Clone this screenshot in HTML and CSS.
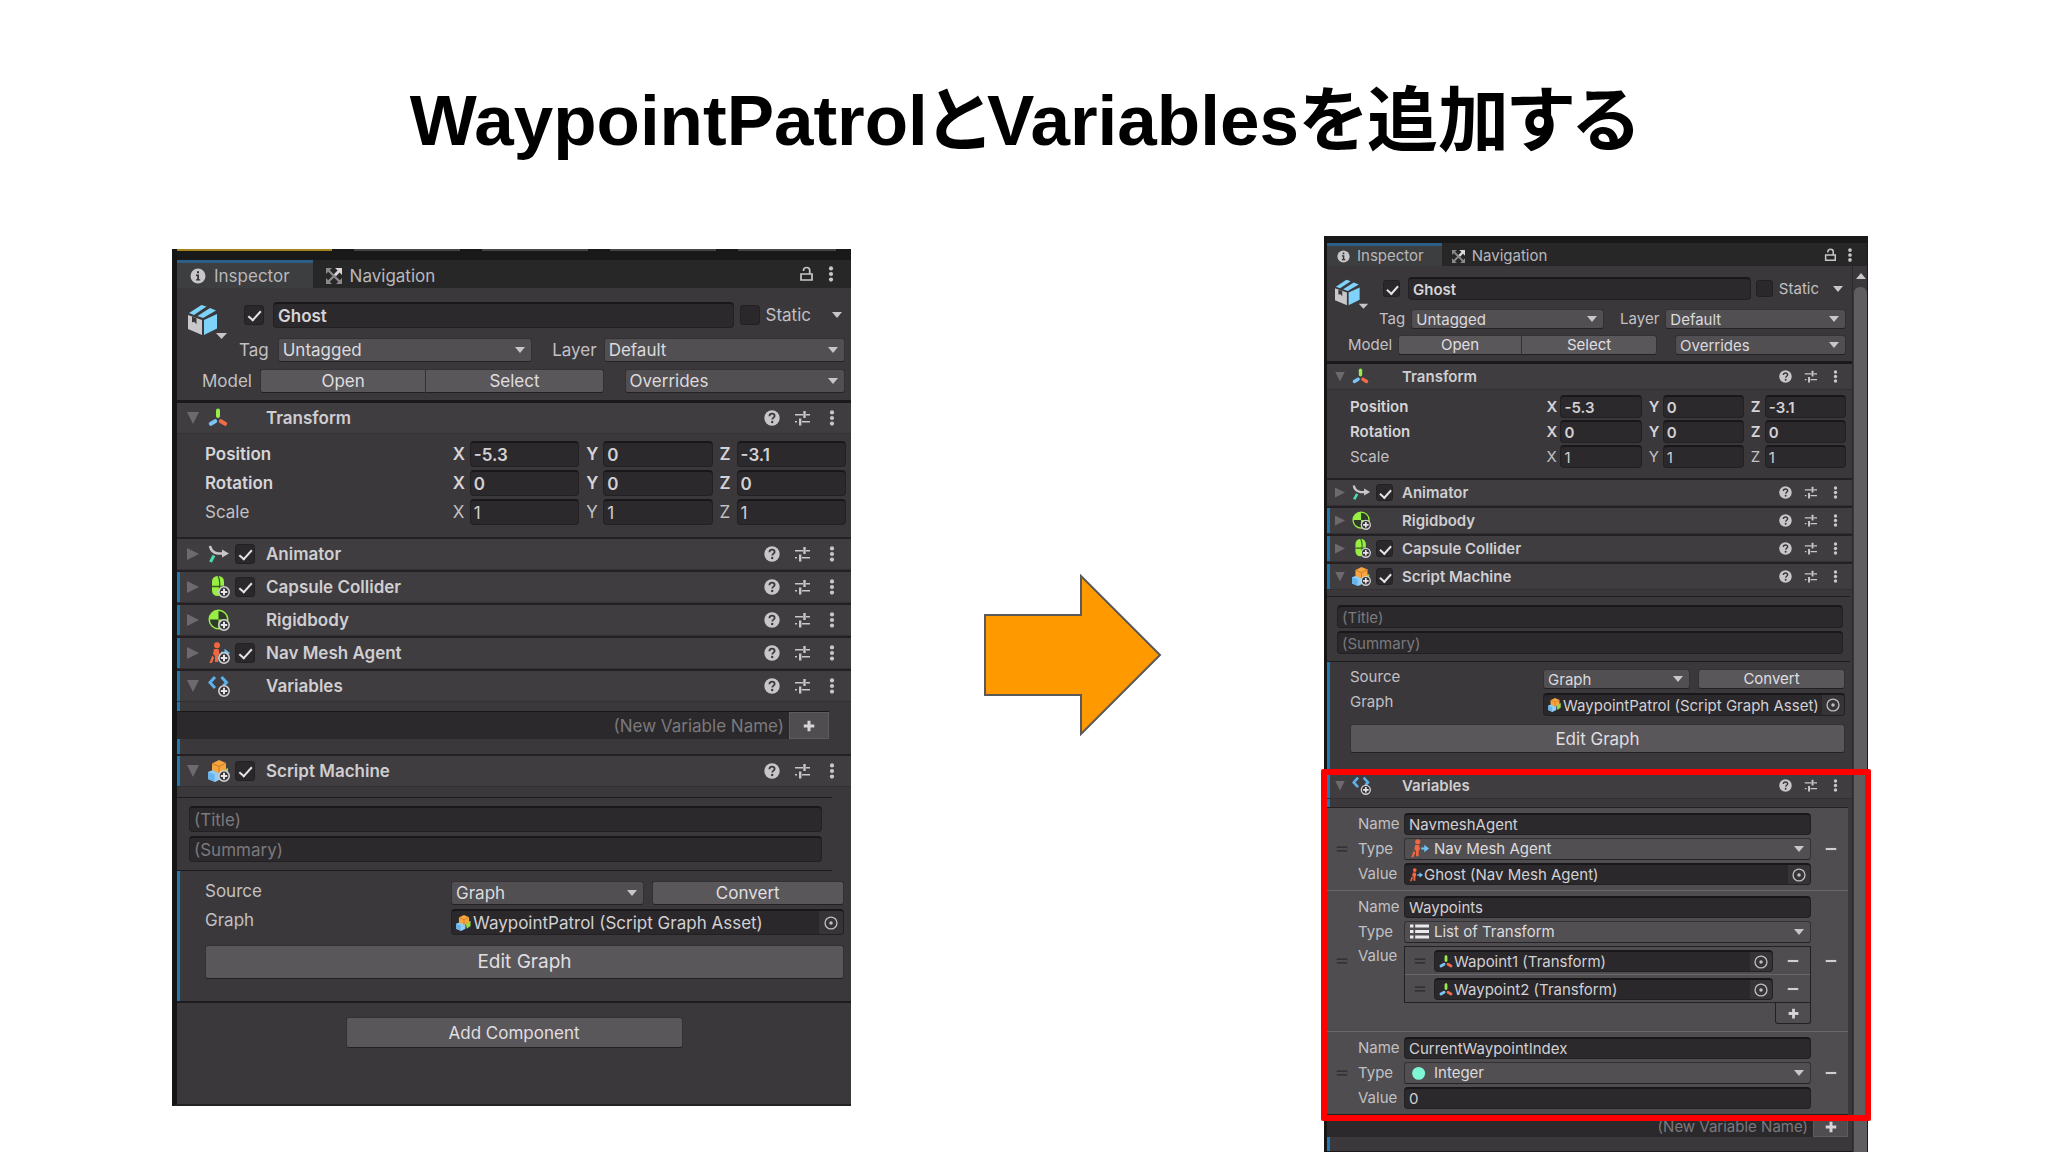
FILE: index.html
```
<!DOCTYPE html>
<html lang="ja">
<head>
    <meta charset="UTF-8">
    <meta name="viewport" content="width=device-width, initial-scale=1.0">
    <title>WaypointPatrolとVariablesを追加する</title>
    <link rel="stylesheet" href="styles.css">
</head>
<body>
    <svg class="sprite" aria-hidden="true">
        <symbol id="i-info" viewBox="0 0 16 16"><circle cx="8" cy="8" r="7.5" fill="#c8c6c9"/><path d="M6 6.6h3v4.600h1.200v1.400H6v-1.400h1.200V8H6zM7 3.200h2v2.100H7z" fill="#333"/></symbol>
        <symbol id="i-nav" viewBox="0 0 16 16"><g stroke="#8b898c" stroke-width="2.4" fill="none"><path d="M2 2l12 12M2 14L14 2"/></g><path d="M0 0h6L0 6zM0 16v-6l6 6zM16 16h-6l6-6z" fill="#8b898c"/><path d="M9 0h7v7l-2.400-2.400-3.600 3.600-2-2 3.600-3.600z" fill="#d8d6d9"/></symbol>
        <symbol id="i-lock" viewBox="0 0 16 16"><path d="M3 8h11v6H3zM5.500 5V4.200C5.500 2.400 7 1.500 8.600 1.500s3.100 1 3.100 2.700V8" fill="none" stroke="#c8c6c9" stroke-width="1.700"/></symbol>
        <symbol id="i-dots" viewBox="0 0 16 16"><g fill="#c8c6c9"><circle cx="8" cy="2.400" r="2.100"/><circle cx="8" cy="8" r="2.100"/><circle cx="8" cy="13.600" r="2.100"/></g></symbol>
        <symbol id="i-help" viewBox="0 0 16 16"><circle cx="8" cy="8" r="7.700" fill="#c8c6c9"/><path d="M5.400 6.300C5.400 4.600 6.500 3.700 8 3.700s2.600.9 2.600 2.200c0 1.700-2.300 1.800-2.300 3.500" fill="none" stroke="#3a383b" stroke-width="1.800"/><circle cx="8.200" cy="12" r="1.200" fill="#3a383b"/></symbol>
        <symbol id="i-preset" viewBox="0 0 16 16"><g fill="#c8c6c9"><path d="M1 4h8v1.500H1zM12 4h4v1.500h-4zM9.300 1h2.400v7H9.300zM1 11h2v1.500H1zM8 11h8v1.500H8zM5 8.500h2.400v7H5z"/></g></symbol>
        <symbol id="i-cube" viewBox="0 0 40 40"><path d="M0 11l14 5v15L0 25z" fill="#c9c7ca"/><path d="M4 12.500l4.500 1.700v6L6.400 18 4 18.300z" fill="#39373a"/><path d="M16 16l13-6v14.500L16 31z" fill="#7fd3fb"/><path d="M1 9L13.500 1l5 1.600L6 11z" fill="#7fd3fb"/><path d="M9.500 12L22 4l6 2.500L15 14z" fill="#7fd3fb"/><path d="M28 29h11l-5.500 6z" fill="#c8c6c9"/></symbol>
        <symbol id="i-transform" viewBox="0 0 20 20"><g stroke-width="4" stroke-linecap="round"><path d="M10 2.500V8" stroke="#97ec4c"/><path d="M7.200 13.200L2.800 15.800" stroke="#7cc4f5"/><path d="M12.800 13.200L17.200 15.800" stroke="#f26b45"/></g></symbol>
        <symbol id="i-plus-badge" viewBox="0 0 22 22"><circle cx="16" cy="16" r="5.200" fill="#333134" stroke="#d2d0d3" stroke-width="1.600"/><path d="M16 12.800v6.400M12.800 16h6.400" stroke="#e6e4e7" stroke-width="2"/></symbol>
        <symbol id="i-animator" viewBox="0 0 22 22"><path d="M2 3c1 5 4 7 8 7.500h5" fill="none" stroke="#c8c6c9" stroke-width="2.600"/><path d="M14 6.500l7 4-7 4z" fill="#c8c6c9"/><path d="M6 12.500L2.500 19" stroke="#48dcae" stroke-width="3"/></symbol>
        <symbol id="i-capsule" viewBox="0 0 22 22"><rect x="4" y="0" width="12" height="20" rx="5.500" fill="#98ee42"/><path d="M4 10.500h12M10 0c2 3 2 6 1.500 10.500V20" stroke="#3a5c22" stroke-width="1.300" fill="none"/><use href="#i-plus-badge"/></symbol>
        <symbol id="i-rigid" viewBox="0 0 22 22"><circle cx="10.500" cy="10.500" r="9.300" fill="#2f3a28" stroke="#98ee42" stroke-width="1.500"/><path d="M10.500 10.500V1.200a9.300 9.300 0 0 0-9.300 9.300zM10.500 10.500h9.300a9.300 9.300 0 0 1-9.300 9.300z" fill="#98ee42"/><use href="#i-plus-badge"/></symbol>
        <symbol id="i-agent" viewBox="0 0 22 22"><g fill="#f2673f"><circle cx="9" cy="3.200" r="3"/><path d="M6 7h4.500l1 5-1.500 1.500V20H7v-6l-2-2zM4.200 13.500l2 2L4 21H1.500z"/></g><path d="M13 9.800h3.500V6.800L22 11l-5.500 4.200v-3H13z" fill="#6cc3f4"/></symbol>
        <symbol id="i-agent-plus" viewBox="0 0 22 22"><use href="#i-agent"/><use href="#i-plus-badge"/></symbol>
        <symbol id="i-vars" viewBox="0 0 22 22"><path d="M7 2L2 7.500 7 13M13.500 2l5 5.500-3 3" fill="none" stroke="#5db0ea" stroke-width="3"/><use href="#i-plus-badge"/></symbol>
        <symbol id="i-blocks" viewBox="0 0 22 22"><path d="M13 11l7-3v7l-5 4z" fill="#9ad548"/><path d="M0 12l6-2.500 7 2.500v7l-6 3-7-3z" fill="#8fcdf7"/><path d="M0 12l6.500 2.500v7.200L0 19z" fill="#6ab2ea"/><path d="M4 3.500L11 0l7 3v7l-7 3.500L4 10z" fill="#f7a540"/><path d="M4 3.500l7 3 7-3.500M11 6.500v7" fill="none" stroke="#cc7620" stroke-width="1"/></symbol>
        <symbol id="i-blocks-plus" viewBox="0 0 22 22"><use href="#i-blocks"/><use href="#i-plus-badge"/></symbol>
        <symbol id="i-list" viewBox="0 0 22 22"><path d="M0 3h4v3.500H0zM6 3h16v3.500H6zM0 9.300h4v3.500H0zM6 9.300h16v3.500H6zM0 15.600h4v3.500H0zM6 15.600h16v3.500H6z" fill="#eceaed"/></symbol>
        <symbol id="i-int" viewBox="0 0 22 22"><circle cx="10" cy="12" r="7.500" fill="#7ff7d4"/></symbol>
        <symbol id="i-target" viewBox="0 0 16 16"><circle cx="8" cy="8" r="6.800" fill="none" stroke="#c0bec1" stroke-width="1.500"/><circle cx="8" cy="8" r="2" fill="#c0bec1"/></symbol>
        <symbol id="i-plus" viewBox="0 0 16 16"><path d="M8 2v12M2 8h12" stroke="#d6d4d7" stroke-width="3.400"/></symbol>
        <symbol id="i-minus" viewBox="0 0 16 16"><path d="M2 8h12" stroke="#d0ced1" stroke-width="2.400"/></symbol>
        <symbol id="i-grip" viewBox="0 0 16 16"><path d="M1 5.500h14M1 10.500h14" stroke="#2b292c" stroke-width="1.400"/></symbol>
    </svg>

    <main class="slide">
        <h1>WaypointPatrolとVariablesを追加する</h1>

        <div class="stage">
            <!-- before -->
            <section class="inspector before" aria-label="Ghost before">
                <div class="strip"></div>
                <nav class="tabs">
                    <button class="tab active"><svg><use href="#i-info"/></svg>Inspector</button>
                    <button class="tab"><svg><use href="#i-nav"/></svg>Navigation</button>
                    <span class="tab-tools">
                        <button aria-label="Lock"><svg><use href="#i-lock"/></svg></button>
                        <button aria-label="Menu"><svg><use href="#i-dots"/></svg></button>
                    </span>
                </nav>
                <div class="content">
                    <div class="head">
                        <div class="head-row name-row">
                            <svg class="cube"><use href="#i-cube"/></svg>
                            <input type="checkbox" aria-label="Active" checked>
                            <input class="field bold" type="text" aria-label="Object name" value="Ghost">
                            <label class="static"><input type="checkbox">Static</label>
                            <button class="caret" aria-label="Static options"></button>
                        </div>
                        <div class="head-row tag-row">
                            <label for="tag-a">Tag</label>
                            <span class="drop"><select id="tag-a"><option>Untagged</option></select></span>
                            <label for="layer-a">Layer</label>
                            <span class="drop"><select id="layer-a"><option>Default</option></select></span>
                        </div>
                        <div class="head-row model-row">
                            <span>Model</span>
                            <button class="btn">Open</button>
                            <button class="btn">Select</button>
                            <span class="drop"><select aria-label="Overrides"><option>Overrides</option></select></span>
                        </div>
                    </div>

                    <section class="component first">
                        <header class="bar">
                            <button class="fold open" aria-label="Collapse"></button><svg class="icon small-icon"><use href="#i-transform"/></svg><i class="no-check"></i>
                            <h2>Transform</h2>
                            <button class="tool" aria-label="Help"><svg><use href="#i-help"/></svg></button><button class="tool" aria-label="Presets"><svg><use href="#i-preset"/></svg></button><button class="tool" aria-label="More"><svg><use href="#i-dots"/></svg></button>
                        </header>
                        <div class="vectors">
                            <div class="vector bold"><span>Position</span><label>X<input class="field" type="text" value="-5.3"></label><label>Y<input class="field" type="text" value="0"></label><label>Z<input class="field" type="text" value="-3.1"></label></div>
                            <div class="vector bold"><span>Rotation</span><label>X<input class="field" type="text" value="0"></label><label>Y<input class="field" type="text" value="0"></label><label>Z<input class="field" type="text" value="0"></label></div>
                            <div class="vector"><span>Scale</span><label>X<input class="field" type="text" value="1"></label><label>Y<input class="field" type="text" value="1"></label><label>Z<input class="field" type="text" value="1"></label></div>
                        </div>
                    </section>

                    <section class="component">
                        <header class="bar">
                            <button class="fold" aria-label="Expand"></button><svg class="icon"><use href="#i-animator"/></svg><input type="checkbox" aria-label="Animator enabled" checked>
                            <h2>Animator</h2>
                            <button class="tool" aria-label="Help"><svg><use href="#i-help"/></svg></button><button class="tool" aria-label="Presets"><svg><use href="#i-preset"/></svg></button><button class="tool" aria-label="More"><svg><use href="#i-dots"/></svg></button>
                        </header>
                    </section>
                    <section class="component added">
                        <header class="bar">
                            <button class="fold" aria-label="Expand"></button><svg class="icon"><use href="#i-capsule"/></svg><input type="checkbox" aria-label="Capsule Collider enabled" checked>
                            <h2>Capsule Collider</h2>
                            <button class="tool" aria-label="Help"><svg><use href="#i-help"/></svg></button><button class="tool" aria-label="Presets"><svg><use href="#i-preset"/></svg></button><button class="tool" aria-label="More"><svg><use href="#i-dots"/></svg></button>
                        </header>
                    </section>
                    <section class="component added">
                        <header class="bar">
                            <button class="fold" aria-label="Expand"></button><svg class="icon"><use href="#i-rigid"/></svg><i class="no-check"></i>
                            <h2>Rigidbody</h2>
                            <button class="tool" aria-label="Help"><svg><use href="#i-help"/></svg></button><button class="tool" aria-label="Presets"><svg><use href="#i-preset"/></svg></button><button class="tool" aria-label="More"><svg><use href="#i-dots"/></svg></button>
                        </header>
                    </section>
                    <section class="component added">
                        <header class="bar">
                            <button class="fold" aria-label="Expand"></button><svg class="icon"><use href="#i-agent-plus"/></svg><input type="checkbox" aria-label="Nav Mesh Agent enabled" checked>
                            <h2>Nav Mesh Agent</h2>
                            <button class="tool" aria-label="Help"><svg><use href="#i-help"/></svg></button><button class="tool" aria-label="Presets"><svg><use href="#i-preset"/></svg></button><button class="tool" aria-label="More"><svg><use href="#i-dots"/></svg></button>
                        </header>
                    </section>

                    <section class="component added">
                        <header class="bar">
                            <button class="fold open" aria-label="Collapse"></button><svg class="icon"><use href="#i-vars"/></svg><i class="no-check"></i>
                            <h2>Variables</h2>
                            <button class="tool" aria-label="Help"><svg><use href="#i-help"/></svg></button><button class="tool" aria-label="Presets"><svg><use href="#i-preset"/></svg></button><button class="tool" aria-label="More"><svg><use href="#i-dots"/></svg></button>
                        </header>
                        <div class="variables">
                            <div class="new-variable"><input type="text" aria-label="New variable name" placeholder="(New Variable Name)"><button aria-label="Add variable"><svg><use href="#i-plus"/></svg></button></div>
                        </div>
                    </section>

                    <section class="component added">
                        <header class="bar">
                            <button class="fold open" aria-label="Collapse"></button><svg class="icon"><use href="#i-blocks-plus"/></svg><input type="checkbox" aria-label="Script Machine enabled" checked>
                            <h2>Script Machine</h2>
                            <button class="tool" aria-label="Help"><svg><use href="#i-help"/></svg></button><button class="tool" aria-label="Presets"><svg><use href="#i-preset"/></svg></button><button class="tool" aria-label="More"><svg><use href="#i-dots"/></svg></button>
                        </header>
                        <div class="summary">
                            <input class="field" type="text" aria-label="Title" placeholder="(Title)">
                            <input class="field" type="text" aria-label="Summary" placeholder="(Summary)">
                        </div>
                        <div class="graph">
                            <div class="prop"><label for="source-a">Source</label><span class="drop"><select id="source-a"><option>Graph</option></select></span><button class="btn">Convert</button></div>
                            <div class="prop asset"><label for="graph-a">Graph</label><span class="object"><svg><use href="#i-blocks"/></svg><input id="graph-a" type="text" value="WaypointPatrol (Script Graph Asset)"><button aria-label="Pick graph"><svg><use href="#i-target"/></svg></button></span></div>
                            <button class="btn edit">Edit Graph</button>
                        </div>
                    </section>
                    <div class="add"><button class="btn">Add Component</button></div>
                </div>
            </section>

            <svg class="arrow" viewBox="0 0 178 162" role="img" aria-label="Arrow right"><path d="M1 41h96V2l79 79-79 79v-39H1z" fill="#ff9900" stroke="#595959" stroke-width="2"/></svg>

            <!-- after -->
            <section class="inspector after" aria-label="Ghost after">
                <div class="strip"></div>
                <nav class="tabs">
                    <button class="tab active"><svg><use href="#i-info"/></svg>Inspector</button>
                    <button class="tab"><svg><use href="#i-nav"/></svg>Navigation</button>
                    <span class="tab-tools">
                        <button aria-label="Lock"><svg><use href="#i-lock"/></svg></button>
                        <button aria-label="Menu"><svg><use href="#i-dots"/></svg></button>
                    </span>
                </nav>
                <div class="scroll">
                    <div class="content">
                        <div class="head">
                            <div class="head-row name-row">
                                <svg class="cube"><use href="#i-cube"/></svg>
                                <input type="checkbox" aria-label="Active" checked>
                                <input class="field bold" type="text" aria-label="Object name" value="Ghost">
                                <label class="static"><input type="checkbox">Static</label>
                                <button class="caret" aria-label="Static options"></button>
                            </div>
                            <div class="head-row tag-row">
                                <label for="tag-b">Tag</label>
                                <span class="drop"><select id="tag-b"><option>Untagged</option></select></span>
                                <label for="layer-b">Layer</label>
                                <span class="drop"><select id="layer-b"><option>Default</option></select></span>
                            </div>
                            <div class="head-row model-row">
                                <span>Model</span>
                                <button class="btn">Open</button>
                                <button class="btn">Select</button>
                                <span class="drop"><select aria-label="Overrides"><option>Overrides</option></select></span>
                            </div>
                        </div>

                        <section class="component first">
                            <header class="bar">
                                <button class="fold open" aria-label="Collapse"></button><svg class="icon small-icon"><use href="#i-transform"/></svg><i class="no-check"></i>
                                <h2>Transform</h2>
                                <button class="tool" aria-label="Help"><svg><use href="#i-help"/></svg></button><button class="tool" aria-label="Presets"><svg><use href="#i-preset"/></svg></button><button class="tool" aria-label="More"><svg><use href="#i-dots"/></svg></button>
                            </header>
                            <div class="vectors">
                                <div class="vector bold"><span>Position</span><label>X<input class="field" type="text" value="-5.3"></label><label>Y<input class="field" type="text" value="0"></label><label>Z<input class="field" type="text" value="-3.1"></label></div>
                                <div class="vector bold"><span>Rotation</span><label>X<input class="field" type="text" value="0"></label><label>Y<input class="field" type="text" value="0"></label><label>Z<input class="field" type="text" value="0"></label></div>
                                <div class="vector"><span>Scale</span><label>X<input class="field" type="text" value="1"></label><label>Y<input class="field" type="text" value="1"></label><label>Z<input class="field" type="text" value="1"></label></div>
                            </div>
                        </section>

                        <section class="component">
                            <header class="bar">
                                <button class="fold" aria-label="Expand"></button><svg class="icon"><use href="#i-animator"/></svg><input type="checkbox" aria-label="Animator enabled" checked>
                                <h2>Animator</h2>
                                <button class="tool" aria-label="Help"><svg><use href="#i-help"/></svg></button><button class="tool" aria-label="Presets"><svg><use href="#i-preset"/></svg></button><button class="tool" aria-label="More"><svg><use href="#i-dots"/></svg></button>
                            </header>
                        </section>
                        <section class="component added">
                            <header class="bar">
                                <button class="fold" aria-label="Expand"></button><svg class="icon"><use href="#i-rigid"/></svg><i class="no-check"></i>
                                <h2>Rigidbody</h2>
                                <button class="tool" aria-label="Help"><svg><use href="#i-help"/></svg></button><button class="tool" aria-label="Presets"><svg><use href="#i-preset"/></svg></button><button class="tool" aria-label="More"><svg><use href="#i-dots"/></svg></button>
                            </header>
                        </section>
                        <section class="component added">
                            <header class="bar">
                                <button class="fold" aria-label="Expand"></button><svg class="icon"><use href="#i-capsule"/></svg><input type="checkbox" aria-label="Capsule Collider enabled" checked>
                                <h2>Capsule Collider</h2>
                                <button class="tool" aria-label="Help"><svg><use href="#i-help"/></svg></button><button class="tool" aria-label="Presets"><svg><use href="#i-preset"/></svg></button><button class="tool" aria-label="More"><svg><use href="#i-dots"/></svg></button>
                            </header>
                        </section>

                        <section class="component added">
                            <header class="bar">
                                <button class="fold open" aria-label="Collapse"></button><svg class="icon"><use href="#i-blocks-plus"/></svg><input type="checkbox" aria-label="Script Machine enabled" checked>
                                <h2>Script Machine</h2>
                                <button class="tool" aria-label="Help"><svg><use href="#i-help"/></svg></button><button class="tool" aria-label="Presets"><svg><use href="#i-preset"/></svg></button><button class="tool" aria-label="More"><svg><use href="#i-dots"/></svg></button>
                            </header>
                            <div class="summary">
                                <input class="field" type="text" aria-label="Title" placeholder="(Title)">
                                <input class="field" type="text" aria-label="Summary" placeholder="(Summary)">
                            </div>
                            <div class="graph">
                                <div class="prop"><label for="source-b">Source</label><span class="drop"><select id="source-b"><option>Graph</option></select></span><button class="btn">Convert</button></div>
                                <div class="prop asset"><label for="graph-b">Graph</label><span class="object"><svg><use href="#i-blocks"/></svg><input id="graph-b" type="text" value="WaypointPatrol (Script Graph Asset)"><button aria-label="Pick graph"><svg><use href="#i-target"/></svg></button></span></div>
                                <button class="btn edit">Edit Graph</button>
                            </div>
                        </section>

                        <section class="component added last">
                            <header class="bar">
                                <button class="fold open" aria-label="Collapse"></button><svg class="icon"><use href="#i-vars"/></svg><i class="no-check"></i>
                                <h2>Variables</h2>
                                <button class="tool" aria-label="Help"><svg><use href="#i-help"/></svg></button><button class="tool" aria-label="Presets"><svg><use href="#i-preset"/></svg></button><button class="tool" aria-label="More"><svg><use href="#i-dots"/></svg></button>
                            </header>
                            <div class="variables">
                                <ul class="variable-list">
                                    <li>
                                        <svg class="grip"><use href="#i-grip"/></svg>
                                        <div class="variable">
                                            <label for="name-1">Name</label><input id="name-1" class="field" type="text" value="NavmeshAgent">
                                            <label for="type-1">Type</label><span class="drop typed"><svg><use href="#i-agent"/></svg><select id="type-1"><option>Nav Mesh Agent</option></select></span>
                                            <label for="value-1">Value</label><span class="object"><svg><use href="#i-agent"/></svg><input id="value-1" type="text" value="Ghost (Nav Mesh Agent)"><button aria-label="Pick object"><svg><use href="#i-target"/></svg></button></span>
                                        </div>
                                        <button class="remove" aria-label="Remove NavmeshAgent"><svg><use href="#i-minus"/></svg></button>
                                    </li>
                                    <li>
                                        <svg class="grip"><use href="#i-grip"/></svg>
                                        <div class="variable">
                                            <label for="name-2">Name</label><input id="name-2" class="field" type="text" value="Waypoints">
                                            <label for="type-2">Type</label><span class="drop typed"><svg><use href="#i-list"/></svg><select id="type-2"><option>List of Transform</option></select></span>
                                            <span class="value-label">Value</span>
                                            <div class="nested">
                                                <ul>
                                                    <li><svg class="grip"><use href="#i-grip"/></svg><span class="object"><svg><use href="#i-transform"/></svg><input type="text" aria-label="Element 0" value="Wapoint1 (Transform)"><button aria-label="Pick object"><svg><use href="#i-target"/></svg></button></span><button class="remove" aria-label="Remove element 0"><svg><use href="#i-minus"/></svg></button></li>
                                                    <li><svg class="grip"><use href="#i-grip"/></svg><span class="object"><svg><use href="#i-transform"/></svg><input type="text" aria-label="Element 1" value="Waypoint2 (Transform)"><button aria-label="Pick object"><svg><use href="#i-target"/></svg></button></span><button class="remove" aria-label="Remove element 1"><svg><use href="#i-minus"/></svg></button></li>
                                                </ul>
                                                <button class="append" aria-label="Add element"><svg><use href="#i-plus"/></svg></button>
                                            </div>
                                        </div>
                                        <button class="remove" aria-label="Remove Waypoints"><svg><use href="#i-minus"/></svg></button>
                                    </li>
                                    <li>
                                        <svg class="grip"><use href="#i-grip"/></svg>
                                        <div class="variable">
                                            <label for="name-3">Name</label><input id="name-3" class="field" type="text" value="CurrentWaypointIndex">
                                            <label for="type-3">Type</label><span class="drop typed"><svg><use href="#i-int"/></svg><select id="type-3"><option>Integer</option></select></span>
                                            <label for="value-3">Value</label><input id="value-3" class="field" type="text" value="0">
                                        </div>
                                        <button class="remove" aria-label="Remove CurrentWaypointIndex"><svg><use href="#i-minus"/></svg></button>
                                    </li>
                                </ul>
                                <div class="new-variable"><input type="text" aria-label="New variable name" placeholder="(New Variable Name)"><button aria-label="Add variable"><svg><use href="#i-plus"/></svg></button></div>
                                <div class="highlight"></div>
                            </div>
                        </section>
                    </div>
                    <div class="scrollbar"><span class="up"></span><span class="thumb"></span></div>
                </div>
            </section>
        </div>
    </main>
</body>
</html>
```
FILE: styles.css
```
* {
    box-sizing: border-box;
}

body {
    margin: 0;
    background-color: #fff;
    font-family: Inter, "Liberation Sans", sans-serif;
}

.sprite {
    position: absolute;
    width: 0;
    height: 0;
}

.slide {
    display: flex;
    flex-direction: column;
    min-height: 100vh;
    overflow: hidden;
}

h1 {
    margin: 0;
    padding-top: 3px;
    height: 236px;
    line-height: 236px;
    text-align: center;
    font-family: "Liberation Sans", "Noto Sans CJK JP", sans-serif;
    font-size: 71px;
    font-weight: bold;
    font-feature-settings: "palt";
    color: #000;
}

.stage {
    flex: 1;
    display: grid;
    grid-template-columns: 679fr 473fr 544fr;
    align-items: start;
    padding: 0 180px 0 172px;
}

.arrow {
    width: 178px;
    margin: 338px 0 0 133px;
}

/* ---------- inspector window, sizes per copy ---------- */
.before {
    --text: 17px;
    --edge: 5px;
    --strip: 11px;
    --tabs: 28px;
    --field: 26px;
    --drop: 24px;
    --bar: 31px;
    --check: 20px;
    --icon: 22px;
    --tool: 16px;
    --tool-gap: 14px;
    --fold: 12px;
    --fold-gap: 9px;
    --title-gap: 11px;
    --indent: 28px;
    --label: 38.5%;
    margin-top: 13px;
}

.after {
    --text: 15px;
    --edge: 3px;
    --strip: 7px;
    --tabs: 23px;
    --field: 23px;
    --drop: 20px;
    --bar: 26px;
    --check: 17px;
    --icon: 19px;
    --tool: 13px;
    --tool-gap: 12px;
    --fold: 10px;
    --fold-gap: 7px;
    --title-gap: 9px;
    --indent: 23px;
    --label: 39%;
    align-self: stretch;
    display: flex;
    flex-direction: column;
    border-right: 1px solid #1a1a1a;
}

.inspector {
    background-color: #3a383b;
    border-left: var(--edge) solid #151515;
    color: #c2c0c3;
    font-size: var(--text);
    line-height: 20px;
}

.before {
    border-bottom: 2px solid #222;
}

.inspector button,
.inspector input,
.inspector select {
    margin: 0;
    padding: 0;
    border: 0;
    font: inherit;
    color: inherit;
    background: none;
    min-width: 0;
}

.inspector button {
    display: inline-flex;
    align-items: center;
    justify-content: center;
}

.inspector svg {
    flex: none;
    display: block;
}

.strip {
    height: var(--strip);
    background-color: #191919;
}

.before .strip {
    background-image:
        linear-gradient(#a3841c, #a3841c),
        repeating-linear-gradient(90deg, transparent 0 10px, #444745 10px 116px, transparent 116px 128px);
    background-size: 23% 2px, 73% 2px;
    background-position: 0 0, 92% 0;
    background-repeat: no-repeat;
}

/* tabs */
.tabs {
    display: flex;
    height: var(--tabs);
    background-color: #282728;
}

.inspector .tab {
    gap: 8px;
    padding: 0 20px 0 13px;
    border-top: 3px solid transparent;
    color: #b9b7ba;
}

.inspector .tab.active {
    background-color: #3c3e40;
    border-top-color: #2d5f86;
    padding-right: 23px;
}

.inspector .tab svg {
    width: var(--tool);
    height: var(--tool);
}

.inspector.after .tab {
    padding-left: 10px;
    gap: 7px;
}

.inspector.after .tab.active {
    padding-right: 18px;
}

.tab-tools {
    display: flex;
    gap: 9px;
    margin-left: auto;
    padding-right: 12px;
}

.tab-tools svg {
    width: 16px;
    height: 16px;
}

.after .tab-tools {
    gap: 6px;
    padding-right: 10px;
}

.after .tab-tools svg {
    width: 14px;
    height: 14px;
}

/* controls */
.inspector .field {
    width: 100%;
    height: var(--field);
    padding: 0 4px;
    border: 1px solid #222023;
    border-top: 2px solid #19171a;
    border-radius: 4px;
    background-color: #2b292c;
    color: #d2d0d3;
}

.inspector .bold {
    font-weight: 600;
    color: #d6d4d7;
}

.inspector .vector .field {
    font-weight: inherit;
}

.inspector ::placeholder {
    color: #7b797c;
    opacity: 1;
}

.inspector .btn {
    height: var(--drop);
    border: 1px solid #333134;
    border-bottom-color: #222023;
    border-radius: 3px;
    background-color: #59575a;
    color: #e0dee1;
}

.drop {
    position: relative;
    display: block;
    min-width: 0;
    height: var(--drop);
}

.inspector .drop select {
    appearance: none;
    width: 100%;
    height: 100%;
    padding: 0 24px 0 4px;
    border: 1px solid #333134;
    border-bottom-color: #242225;
    border-radius: 3px;
    background-color: #514f52;
    color: #dcdadd;
}

.drop::after,
.inspector .caret::after {
    content: "";
    position: absolute;
    right: 7px;
    top: 50%;
    margin-top: -3px;
    border: 5px solid transparent;
    border-top: 6px solid #c8c6c9;
    border-bottom: 0;
    pointer-events: none;
}

.inspector input[type="checkbox"] {
    appearance: none;
    flex: none;
    position: relative;
    width: var(--check);
    height: var(--check);
    border: 1px solid #222023;
    border-radius: 3px;
    background-color: #2a282b;
}

.inspector input[type="checkbox"]:checked::before {
    content: "";
    position: absolute;
    left: 34%;
    top: 10%;
    width: 30%;
    height: 62%;
    border: solid #e4e2e5;
    border-width: 0 2px 2px 0;
    transform: rotate(42deg);
}

.object {
    display: flex;
    align-items: center;
    min-width: 0;
    height: var(--field);
    padding-left: 4px;
    border: 1px solid #222023;
    border-top: 2px solid #19171a;
    border-radius: 4px;
    background-color: #2a282b;
    color: #d2d0d3;
}

.object > svg {
    width: 16px;
    height: 16px;
    margin-right: 1px;
}

.inspector .object input {
    flex: 1;
    height: 100%;
}

.inspector .object button {
    width: 24px;
    height: 100%;
    background-color: #363437;
    border-radius: 0 3px 3px 0;
}

.object button svg {
    width: 14px;
    height: 14px;
}

.after .object > svg {
    width: 14px;
    height: 14px;
}

.inspector.after .object button {
    width: 22px;
}

/* object header */
.head {
    padding: 14px 6px 7px 0;
}

.after .head {
    padding: 11px 6px 6px 0;
}

.head-row {
    display: flex;
    align-items: center;
    height: var(--drop);
}

.name-row {
    height: var(--field);
    padding-left: 11px;
    margin-bottom: 10px;
}

.cube {
    width: 40px;
    height: 40px;
    margin: 2px 16px 0 0;
    align-self: flex-start;
}

.inspector .name-row .field {
    flex: 1;
    margin: 0 6px 0 9px;
}

.static {
    display: flex;
    align-items: center;
    gap: 6px;
}

.inspector .caret {
    position: relative;
    width: 34px;
    height: 20px;
}

.inspector .caret::after {
    right: 3px;
}

.tag-row {
    padding-left: 62px;
    margin-bottom: 7px;
}

.tag-row .drop {
    flex: 252;
    margin: 0 20px 0 9px;
}

.tag-row .drop:last-child {
    flex: 239;
    margin: 0 0 0 7px;
}

.model-row {
    padding-left: 25px;
}

.inspector .model-row .btn {
    flex: 164;
    margin-left: 8px;
    border-radius: 3px 0 0 3px;
}

.inspector .model-row .btn + .btn {
    flex: 176;
    margin-left: 0;
    border-left: 0;
    border-radius: 0 3px 3px 0;
}

.model-row .drop {
    flex: 220;
    margin-left: 21px;
}

.after .name-row {
    padding-left: 8px;
    margin-bottom: 9px;
}

.after .cube {
    width: 34px;
    height: 34px;
    margin-right: 14px;
}

.inspector.after .name-row .field {
    margin: 0 5px 0 8px;
}

.inspector.after .caret {
    width: 27px;
}

.after .tag-row {
    padding-left: 52px;
    margin-bottom: 6px;
}

.after .tag-row .drop {
    flex: 190;
    margin: 0 16px 0 6px;
}

.after .tag-row .drop:last-child {
    flex: 178;
    margin: 0 0 0 6px;
}

.after .model-row {
    padding-left: 21px;
}

.inspector.after .model-row .btn {
    flex: 122;
    margin-left: 6px;
}

.inspector.after .model-row .btn + .btn {
    flex: 134;
    margin-left: 0;
}

.after .model-row .drop {
    flex: 171;
    margin-left: 18px;
}

/* components */
.component {
    border-top: 2px solid #232124;
}

.component.first {
    border-top: 3px solid #1b191c;
}

.added > .bar,
.added > .graph,
.added > .variables {
    box-shadow: inset 3px 0 #1f79b0;
}

.bar {
    display: flex;
    align-items: center;
    height: var(--bar);
    padding: 0 11px 0 10px;
    border-bottom: 1px solid #333134;
    background-color: #3f3d40;
}

.after .bar {
    padding: 0 10px 0 8px;
}

.inspector .fold {
    width: var(--fold);
    height: var(--fold);
    margin-right: var(--fold-gap);
    background-color: #6c6a6d;
    clip-path: polygon(0 0, 100% 50%, 0 100%);
}

.inspector .fold.open {
    clip-path: polygon(0 0, 100% 0, 50% 100%);
}

.icon {
    width: var(--icon);
    height: var(--icon);
    margin-right: 5px;
}

.small-icon {
    padding: 1px 2px 1px 0;
}

.no-check {
    width: var(--check);
}

.bar h2 {
    flex: 1;
    margin: 0 0 0 var(--title-gap);
    font-size: var(--text);
    font-weight: 600;
    color: #d0ced1;
}

.inspector .tool + .tool {
    margin-left: var(--tool-gap);
}

.tool svg {
    width: var(--tool);
    height: var(--tool);
}

/* transform */
.vectors {
    display: grid;
    gap: 3px;
    padding: 7px 5px 12px var(--indent);
}

.vector {
    display: grid;
    grid-template-columns: calc(var(--label) - 6px) 1fr 1fr 1fr;
    column-gap: 7px;
    align-items: center;
}

.vector label {
    display: grid;
    grid-template-columns: 17px 1fr;
    align-items: center;
}

.vector .field {
    padding: 0 3px;
}

.after .vectors {
    gap: 2px;
    padding: 5px 6px 10px var(--indent);
}

.after .vector {
    grid-template-columns: calc(var(--label) - 4px) 1fr 1fr 1fr;
}

.after .vector label {
    grid-template-columns: 14px 1fr;
}

/* script machine */
.summary {
    display: grid;
    gap: 4px;
    margin-top: 10px;
    margin-right: 19px;
    padding: 8px 10px 8px 12px;
    border-top: 1px solid #1d1b1e;
    border-bottom: 1px solid #1d1b1e;
}

.graph {
    padding: 10px 7px 22px var(--indent);
}

.prop {
    display: grid;
    grid-template-columns: calc(var(--label) - 8px) 1fr 1fr;
    column-gap: 8px;
    align-items: center;
}

.prop label {
    margin-top: -5px;
}

.asset {
    grid-template-columns: calc(var(--label) - 8px) 1fr;
    margin: 4px 0 10px;
}

.inspector .edit {
    width: 100%;
    height: 34px;
    font-size: 19px;
}

.add {
    padding: 14px 0 56px;
    border-top: 2px solid #1d1b1e;
    text-align: center;
}

.inspector .add .btn {
    width: 50%;
    height: 31px;
}

.after .summary {
    margin: 6px 2px 0 0;
    gap: 3px;
    padding: 8px 7px 7px 10px;
}

.inspector.after .summary .field {
    height: 23px;
}

.after .graph {
    padding: 7px 7px 18px var(--indent);
}

.after .asset {
    margin: 4px 0 8px;
}

.inspector.after .edit {
    height: 29px;
    font-size: 17px;
}

/* variables */
.variables {
    position: relative;
    padding: 9px 22px 15px 0;
}

.new-variable {
    display: flex;
    height: 28px;
    border-top: 1px solid #19171a;
    background-color: #2b292c;
}

.inspector .new-variable input {
    flex: 1;
    padding-right: 5px;
    text-align: right;
}

.inspector .new-variable button {
    width: 40px;
    border: 1px solid #5d5b5e;
    background-color: #4f4d50;
}

.new-variable svg {
    width: 14px;
    height: 14px;
}

.after .variables {
    padding: 8px 4px 14px 0;
}

.after .new-variable {
    height: 22px;
}

.inspector.after .new-variable button {
    width: 35px;
}

.after .last {
    border-bottom: 2px solid #1b191c;
}

.variable-list,
.nested ul {
    margin: 0;
    padding: 0;
    list-style: none;
}

.variable-list {
    --field: 22px;
    --drop: 22px;
    border-top: 1px solid #232124;
    background-color: #4f4d50;
}

.variable-list > li {
    display: flex;
    align-items: center;
    padding: 5px 0 5px 9px;
    border-bottom: 1px solid #6a686b;
}

.variable-list > li:last-child {
    border-bottom-color: #232124;
}

.grip {
    width: 12px;
    height: 14px;
}

.variable {
    flex: 1;
    display: grid;
    grid-template-columns: 46px 1fr;
    gap: 3px 0;
    align-items: center;
    margin-left: 10px;
}

.value-label {
    align-self: start;
}

.inspector .remove {
    width: 37px;
    padding-left: 3px;
}

.remove svg {
    width: 14px;
    height: 14px;
}

.typed > svg {
    position: absolute;
    left: 6px;
    top: 1px;
    width: 19px;
    height: 19px;
}

.inspector .typed select {
    padding-left: 29px;
}

.nested {
    display: flex;
    flex-direction: column;
    align-items: flex-end;
    margin-bottom: 2px;
}

.nested ul {
    width: 100%;
    border: 1px solid #232124;
}

.nested li {
    display: flex;
    align-items: center;
    padding: 3px 0 2px 9px;
}

.nested li + li {
    border-top: 1px solid #6a686b;
}

.nested .object {
    flex: 1;
    margin-left: 8px;
}

.inspector .append {
    width: 36px;
    height: 21px;
    border: 1px solid #232124;
    border-top: 0;
    border-radius: 0 0 3px 3px;
}

.append svg {
    width: 13px;
    height: 13px;
}

/* red frame drawn over the variables component */
.highlight {
    position: absolute;
    top: -30px;
    right: -19px;
    bottom: 30px;
    left: -6px;
    border: 6px solid #f00;
    border-radius: 2px;
    pointer-events: none;
}

/* scroll area */
.scroll {
    flex: 1;
    display: flex;
}

.scroll .content {
    flex: 1;
    min-width: 0;
}

.scrollbar {
    width: 15px;
    display: flex;
    flex-direction: column;
    align-items: center;
    padding: 7px 0 0 1px;
    border-left: 1px solid #2b292c;
}

.up {
    border: 5px solid transparent;
    border-top: 0;
    border-bottom: 6px solid #c8c6c9;
    margin-bottom: 8px;
}

.thumb {
    flex: 1;
    width: 100%;
    border-radius: 6px 6px 0 0;
    background-color: #5f5d60;
}
```
